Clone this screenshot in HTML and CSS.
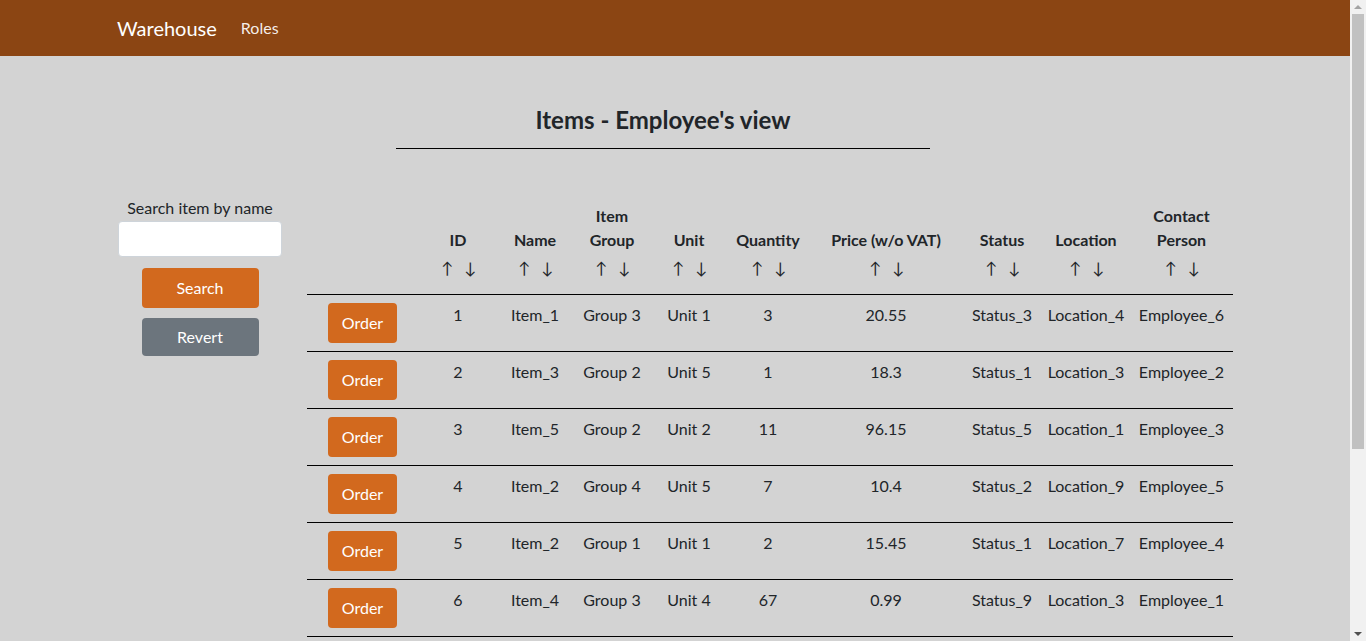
FILE: index.html
```html
<!DOCTYPE html>
<html lang="en">
<head>
<meta charset="utf-8">
<title>Warehouse - Items</title>
<link rel="stylesheet" href="styles.css">
</head>
<body>
<nav class="navbar">
  <a class="brand" href="#">Warehouse</a>
  <a class="nav-link" href="#">Roles</a>
</nav>

<main class="page">
  <div class="title-block">
    <h2 class="title">Items - Employee's view</h2>
    <hr class="title-rule">
  </div>

  <div class="content">
    <aside class="search-panel">
      <label class="search-label" for="q">Search item by name</label>
      <input class="search-input" id="q" type="text">
      <button class="btn btn-search">Search</button>
      <button class="btn btn-revert">Revert</button>
    </aside>

    <table class="items">
      <colgroup>
        <col class="c-order"><col class="c-id"><col class="c-name"><col class="c-group"><col class="c-unit"><col class="c-qty"><col class="c-price"><col class="c-status"><col class="c-loc"><col class="c-contact">
      </colgroup>
      <thead>
        <tr>
          <th></th>
          <th><div class="lbl">ID</div><div class="arrows"><span>↑</span><span>↓</span></div></th>
          <th><div class="lbl">Name</div><div class="arrows"><span>↑</span><span>↓</span></div></th>
          <th><div class="lbl">Item Group</div><div class="arrows"><span>↑</span><span>↓</span></div></th>
          <th><div class="lbl">Unit</div><div class="arrows"><span>↑</span><span>↓</span></div></th>
          <th><div class="lbl">Quantity</div><div class="arrows"><span>↑</span><span>↓</span></div></th>
          <th><div class="lbl">Price (w/o VAT)</div><div class="arrows"><span>↑</span><span>↓</span></div></th>
          <th><div class="lbl">Status</div><div class="arrows"><span>↑</span><span>↓</span></div></th>
          <th><div class="lbl">Location</div><div class="arrows"><span>↑</span><span>↓</span></div></th>
          <th><div class="lbl">Contact Person</div><div class="arrows"><span>↑</span><span>↓</span></div></th>
        </tr>
      </thead>
      <tbody>
        <tr><td><button class="btn btn-order">Order</button></td><td>1</td><td>Item_1</td><td>Group 3</td><td>Unit 1</td><td>3</td><td>20.55</td><td>Status_3</td><td>Location_4</td><td>Employee_6</td></tr>
        <tr><td><button class="btn btn-order">Order</button></td><td>2</td><td>Item_3</td><td>Group 2</td><td>Unit 5</td><td>1</td><td>18.3</td><td>Status_1</td><td>Location_3</td><td>Employee_2</td></tr>
        <tr><td><button class="btn btn-order">Order</button></td><td>3</td><td>Item_5</td><td>Group 2</td><td>Unit 2</td><td>11</td><td>96.15</td><td>Status_5</td><td>Location_1</td><td>Employee_3</td></tr>
        <tr><td><button class="btn btn-order">Order</button></td><td>4</td><td>Item_2</td><td>Group 4</td><td>Unit 5</td><td>7</td><td>10.4</td><td>Status_2</td><td>Location_9</td><td>Employee_5</td></tr>
        <tr><td><button class="btn btn-order">Order</button></td><td>5</td><td>Item_2</td><td>Group 1</td><td>Unit 1</td><td>2</td><td>15.45</td><td>Status_1</td><td>Location_7</td><td>Employee_4</td></tr>
        <tr><td><button class="btn btn-order">Order</button></td><td>6</td><td>Item_4</td><td>Group 3</td><td>Unit 4</td><td>67</td><td>0.99</td><td>Status_9</td><td>Location_3</td><td>Employee_1</td></tr>
      </tbody>
    </table>
  </div>
</main>

<div class="scrollbar" aria-hidden="true">
  <svg class="sb-arrow sb-up" width="16" height="14" viewBox="0 0 16 14"><path d="M4 9 L8 5 L12 9 Z" fill="#a3a3a3"/></svg>
  <div class="sb-track"><div class="sb-thumb"></div></div>
  <svg class="sb-arrow sb-down" width="16" height="14" viewBox="0 0 16 14"><path d="M4 5 L8 9 L12 5 Z" fill="#505050"/></svg>
</div>
</body>
</html>
```

FILE: styles.css
```css
* { box-sizing: border-box; }

html, body {
  margin: 0;
  padding: 0;
}

body {
  background: #d3d3d3;
  color: #212529;
  font-family: "Lato", "Noto Sans", sans-serif;
  font-size: 16px;
  line-height: 24px;
}

.navbar {
  height: 56px;
  background: #8b4513;
  display: flex;
  align-items: center;
  padding: 0 0 0 117px;
}

.brand {
  color: #fff;
  font-size: 20px;
  line-height: 30px;
  text-decoration: none;
  margin-right: 16px;
}

.nav-link {
  color: rgba(255, 255, 255, 0.92);
  text-decoration: none;
  padding: 0 8px;
  font-size: 16px;
}

.title-block {
  width: 534px;
  margin-left: 396px;
  padding-top: 49px;
}

.title {
  margin: 0;
  font-size: 24px;
  line-height: 29px;
  font-weight: 700;
  text-align: center;
}

.title-rule {
  margin: 14px 0 0 0;
  border: 0;
  border-top: 1px solid #000;
  height: 0;
}

.content {
  display: flex;
  align-items: flex-start;
  gap: 25px;
  padding-left: 118px;
  margin-top: 47px;
}

.search-panel {
  width: 164px;
  display: flex;
  flex-direction: column;
  align-items: center;
}

.search-label {
  display: block;
  text-align: center;
  line-height: 24px;
}

.search-input {
  width: 164px;
  height: 36px;
  margin-top: 1px;
  border: 1px solid #ced4da;
  border-radius: 4px;
  background: #fff;
  font: inherit;
  padding: 6px 12px;
}

.btn {
  border: 0;
  border-radius: 4px;
  color: #fff;
  font-family: inherit;
  font-size: 16px;
  line-height: 24px;
  cursor: pointer;
}

.btn-search {
  width: 117px;
  height: 40px;
  margin-top: 11px;
  background: #d2691e;
}

.btn-revert {
  width: 117px;
  height: 38px;
  margin-top: 10px;
  background: #6c757d;
}

.items {
  width: 926px;
  table-layout: fixed;
  border-collapse: collapse;
}

.c-order { width: 111px; }
.c-id { width: 80px; }
.c-name { width: 74px; }
.c-group { width: 80px; }
.c-unit { width: 74px; }
.c-qty { width: 84px; }
.c-price { width: 152px; }
.c-status { width: 80px; }
.c-loc { width: 88px; }
.c-contact { width: 103px; }

.items th {
  vertical-align: bottom;
  text-align: center;
  font-weight: 700;
  padding: 8px 2px 14px;
  border-bottom: 1px solid #000;
}

.lbl {
  line-height: 24px;
}

.arrows {
  margin-top: 4px;
  display: flex;
  justify-content: center;
  gap: 13px;
  font-weight: 400;
}

.arrows span {
  width: 10px;
  text-align: center;
}

.items td {
  vertical-align: top;
  text-align: center;
  padding: 8px 2px;
  border-bottom: 1px solid #000;
  white-space: nowrap;
}

.btn-order {
  width: 69px;
  height: 40px;
  background: #d2691e;
  padding: 0;
}

/* drawn window scrollbar, overlaying the right edge */
.scrollbar {
  position: fixed;
  top: 0;
  right: 0;
  width: 16px;
  height: 641px;
  background: #f1f1f1;
  display: flex;
  flex-direction: column;
}

.sb-arrow {
  display: block;
  flex: none;
}

.sb-track {
  flex: 1;
  padding: 0 2px;
}

.sb-thumb {
  height: 435px;
  background: #c1c1c1;
}
```
